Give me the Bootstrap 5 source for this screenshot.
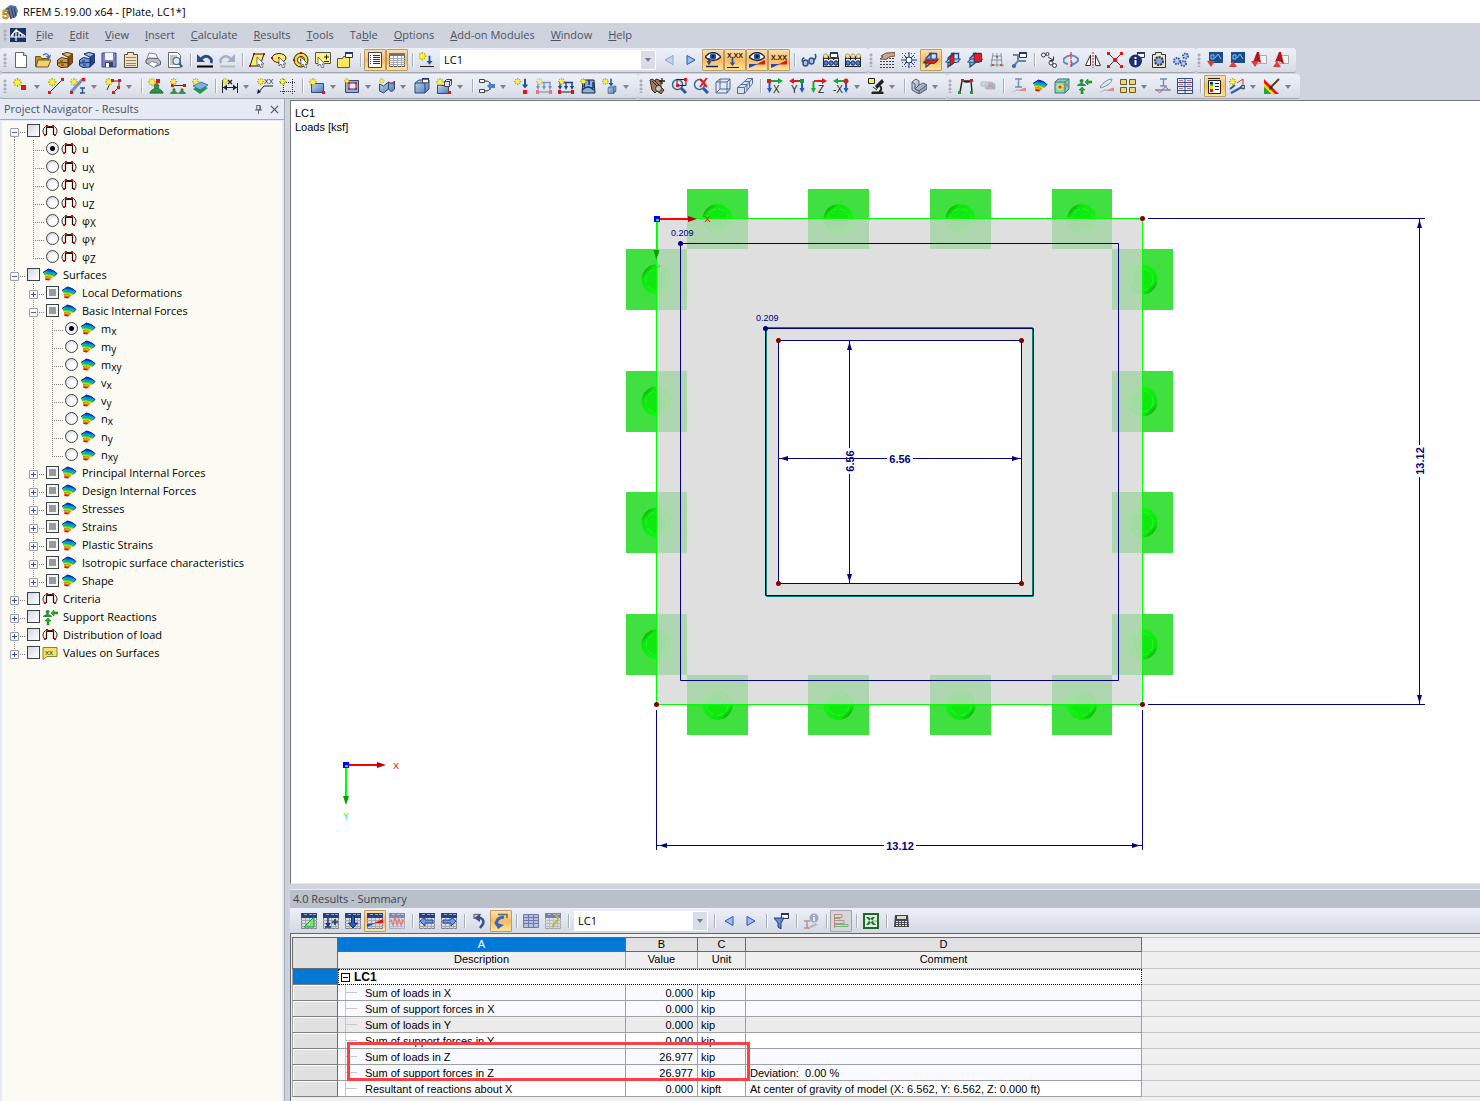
<!DOCTYPE html>
<html lang="en">
<head>
<meta charset="utf-8">
<meta name="viewport" content="width=device-width, initial-scale=1">
<title>RFEM 5.19.00 x64 - [Plate, LC1*]</title>
<link href="https://cdn.jsdelivr.net/npm/bootstrap@5.3.0/dist/css/bootstrap.min.css" rel="stylesheet">
<style>
  :root { --ui: "Open Sans", "Noto Sans", sans-serif; --grid: "Liberation Sans", Arial, sans-serif; }
  body { font-family: var(--ui); font-size: 11px; line-height: 16px; color: #000; background: #cfd3de; height: 100vh; overflow: hidden; }
  svg { display: block; }
  svg text { font-family: var(--grid); }
  .sprite { position: absolute; width: 0; height: 0; }
  .titlebar { height: 23px; padding: 0 2px; gap: 5px; background: #fff; font-size: 11px; }
  .titlebar svg { width: 16px; height: 16px; overflow: visible; }
  .titlebar h1 { font-size: 11px; line-height: 16px; font-weight: 400; }
  .mainmenu { height: 24px; padding-left: 2px; background: #cfd3de; }
  .mainmenu a { color: #4b5264; text-decoration: none; padding: 0 8px; }
  .mainmenu svg { width: 16px; height: 14px; margin-right: 2px; }
  .grip { width: 8px; align-self: stretch; margin: 5px 0; flex: none; background: radial-gradient(circle at 3px 2px, #a8adb9 1px, transparent 2px) 0 0 / 8px 4px; }
  .mainmenu .grip { margin-top: 6px; margin-bottom: 6px; }
  .tbar { height: 25px; margin-top: 1px; padding-right: 4px; border-bottom: 1px solid #a3a7b0; border-radius: 3px; background: linear-gradient(#edf0f8, #e3e7f0 50%, #d6dae4); }
  .tbar.firstbar { padding-left: 2px; }
  .tool { width: 22px; height: 22px; padding: 0; border: 1px solid transparent; border-radius: 1px; display: flex; align-items: center; justify-content: center; flex: none; }
  .tool svg { width: 16px; height: 16px; overflow: visible; }
  .tool:hover { border-color: #c2a46e; background: #fde6b4; }
  .tool.active { border-color: #b99b68; background: linear-gradient(#fde0ae, #fcb95c 50%, #fde59a); }
  .tool.pressed { border-color: #a0a4aa; background: #d3d8d8; }
  .tool.drop { width: 35px; justify-content: flex-start; padding-left: 2px; gap: 5px; }
  .tool.drop::after { content: ""; border: 3px solid transparent; border-top: 4px solid #7c818b; border-bottom: 0; margin-top: 2px; }
  .divide { width: 1px; height: 14px; margin: 0 3px 0 4px; background: #a9aeba; box-shadow: 1px 0 #fff; flex: none; }
  .combo { appearance: none; height: 20px; padding: 0 18px 0 3px; margin: 0 2px; border: 1px solid #fff; border-radius: 0; font-size: 11px; line-height: 18px; color: #000; background: url("data:image/svg+xml,%3Csvg xmlns='http://www.w3.org/2000/svg' width='14' height='18'%3E%3Cpath fill='%23d9dde7' d='M0 0h14v18H0z'/%3E%3Cpath fill='%23757a86' d='M4 7h6l-3 4z'/%3E%3C/svg%3E") right 0 top 0 no-repeat #fff; flex: none; }
  .combo-main { width: 216px; }
  .combo-table { width: 134px; }

  .workspace { min-height: 0; }
  .navigator { width: 285px; flex: none; background: #e6eaf5; border-right: 1px solid #a4a9b8; }
  .panel-head { height: 21px; padding: 0 2px 0 4px; color: #4b5264; border-bottom: 1px solid #a4a9b8; }
  .panel-head h2 { font-size: 11px; line-height: 16px; font-weight: 400; margin: 0; }
  .panel-head .btn { width: 16px; height: 16px; padding: 0; border: 0; display: flex; align-items: center; justify-content: center; }
  .panel-head .btn svg { width: 9px; height: 9px; }
  .tree { margin: 1px 2px 0; padding: 1px 0 0 3px; background: #fcfbf3; }
  .tree li { height: 18px; display: flex; align-items: stretch; }
  .guide, .twig, .fold { position: relative; width: 19px; flex: none; }
  .guide::before, .twig::before, .fold::before { content: ""; position: absolute; left: 9px; top: 0; bottom: 0; width: 1px; background: repeating-linear-gradient(#808080 0 1px, transparent 1px 2px); }
  .twig::after, .fold::after { content: ""; position: absolute; left: 9px; right: -1px; top: 10px; height: 1px; background: repeating-linear-gradient(90deg, #808080 0 1px, transparent 1px 2px); }
  .top > .fold:last-of-type::before { top: 9px; }
  .end > .twig::before, .end > .fold::before { bottom: 8px; }
  .fold button { position: absolute; z-index: 1; left: 5px; top: 6px; width: 9px; height: 9px; padding: 0; border: 1px solid #999eaa; border-radius: 1px; background: linear-gradient(#4a64a8, #4a64a8) center / 5px 1px no-repeat #fbfbfb; }
  .fold button.shut { background: linear-gradient(#34519c, #34519c) center / 5px 1px no-repeat, linear-gradient(#34519c, #34519c) center / 1px 5px no-repeat, #fbfbfb; }
  .tree label { display: flex; align-items: center; padding-left: 3px; white-space: nowrap; }
  .tree label svg { width: 16px; height: 16px; margin: 0 5px 0 2px; overflow: visible; }
  .tree input { appearance: none; width: 13px; height: 13px; margin: 0 0 2px; flex: none; border: 1px solid #3c4048; background: linear-gradient(135deg, #d2d6e0, #fff); }
  .tree input[type=radio] { border-radius: 50%; background: radial-gradient(circle at 60% 65%, #fff 30%, #c3c8d5); }
  .tree input[type=radio]:checked { background: radial-gradient(circle, #000 0 2px, #eef0f5 3px); }
  .tree input.part { background: linear-gradient(#9a9a9a, #9a9a9a) center / 7px 7px no-repeat, #f4f5f8; }
  .tree .axis { font-size: 10px; padding-top: 3px; }

  .viewport { min-height: 0; margin-top: 1px; border: 1px solid #74777e; border-right: 0; border-bottom-color: #e4e7ee; background: #fff; overflow: hidden; }
  .viewport svg { width: 100%; height: 100%; }
  .docs { min-width: 0; padding-left: 5px; }
  .results { flex: none; margin-top: 5px; border-top: 1px solid #e9ecf4; }
  .results h2 { margin: 0; height: 18px; padding: 1px 3px; font-size: 11px; line-height: 16px; font-weight: 400; color: #3d4350; background: #b9c0ca; }
  .results .tablebar { height: 26px; padding-left: 8px; background: linear-gradient(#edf0f8, #d3d8e3); border-bottom: 1px solid #63666c; }
  .sheet { position: relative; height: 167px; padding: 3px 0 0 1px; background: #f0f0f0; border-left: 1px solid #63666c; overflow: hidden; }
  .sheet table { width: 100%; table-layout: fixed; border-collapse: separate; border-spacing: 0; font-family: var(--grid); font-size: 11px; line-height: 14px; }
  .sheet th, .sheet td { padding: 1px 3px 0; height: 16px; border: 0 solid #a0a0a0; border-width: 0 1px 1px 0; font-weight: 400; white-space: nowrap; overflow: hidden; }
  .sheet thead th { text-align: center; background: #f0f0f0; height: 17px; padding: 0 3px 2px; }
  .sheet thead tr:first-child th { height: 15px; padding: 0; border-color: #696969; border-top-width: 1px; background: #e1e1e1; line-height: 13px; }
  .sheet thead tr:first-child th.picked { background: #0078d7; color: #fff; }
  .sheet .rowhead { border-left-width: 1px; border-right-color: #696969; border-bottom-color: #808080; background: #e1e1e1; box-shadow: inset 1px 1px #fff; }
  .sheet thead tr:first-child th.rowhead { background: #e1e1e1; box-shadow: none; }
  .sheet .rowhead.picked { background: #0078d7; box-shadow: none; }
  .sheet .tint td { background: #f8faff; }
  .sheet .band td { background: #ebebeb; }
  .sheet .plain td { background: #fff; }
  .sheet td.case { border: 1px dotted #000; font-weight: 700; font-size: 12px; padding: 0 2px; background: #fff; }
  .case button { width: 9px; height: 9px; margin-right: 4px; padding: 0; border: 1px solid #000; background: linear-gradient(#000, #000) center / 5px 1px no-repeat #fff; vertical-align: 0; display: inline-block; }
  .sheet tr td.item { padding-left: 27px; background-image: linear-gradient(#c8c8c8, #c8c8c8), linear-gradient(#c8c8c8, #c8c8c8); background-size: 12px 1px, 1px 100%; background-position: 7px 7px, 7px 0; background-repeat: no-repeat; }
  .sheet .num { text-align: right; padding-right: 4px; padding-top: 0; }
  .sheet tr .void, .sheet thead tr:first-child .void { background: #f0f0f0; border-color: #c4c4c4; border-right: 0; }
  .sheet .note { padding-left: 4px; padding-top: 0; }
  .callout { position: absolute; left: 56px; top: 108px; width: 403px; height: 39px; border: 3px solid #fb4146; pointer-events: none; }
</style>
<script src="https://cdn.jsdelivr.net/npm/bootstrap@5.3.0/dist/js/bootstrap.bundle.min.js"></script>
</head>
<body class="d-flex flex-column">

<svg class="sprite" aria-hidden="true">
  <defs>
    <linearGradient id="gb" x1="0" y1="0" x2="1" y2="1"><stop offset="0" stop-color="#c3d6f2"/><stop offset="1" stop-color="#4f78b5"/></linearGradient>
    <linearGradient id="gg" x1="0" y1="0" x2="1" y2="1"><stop offset="0" stop-color="#dbe2ea"/><stop offset="1" stop-color="#7f8a99"/></linearGradient>
    <linearGradient id="rain" x1=".6" y1="0" x2=".4" y2="1"><stop offset=".05" stop-color="#0010c8"/><stop offset=".28" stop-color="#0090f0"/><stop offset=".45" stop-color="#10d860"/><stop offset=".62" stop-color="#d8e800"/><stop offset=".78" stop-color="#ff9800"/><stop offset=".95" stop-color="#e00000"/></linearGradient>
    <linearGradient id="ring" x1="0" y1="0" x2="1" y2="1"><stop offset=".1" stop-color="#0c9c0c"/><stop offset=".25" stop-color="#0ee50e"/><stop offset="1" stop-color="#10ff10"/></linearGradient>
    <linearGradient id="ringb" x1="1" y1="1" x2="0" y2="0"><stop offset=".1" stop-color="#0c9c0c"/><stop offset=".25" stop-color="#0ee50e"/><stop offset="1" stop-color="#10ff10"/></linearGradient>
  </defs>
  <!-- shared parts -->
  <symbol id="star" viewBox="0 0 16 16"><path d="M4.500 0v9M0 4.500h9M1.500 1.500l6 6M7.500 1.500l-6 6" stroke="#b8ab00" stroke-width="1.400"/><circle cx="4.500" cy="4.500" r="2.600" fill="#fff33a"/></symbol>
  <symbol id="cursor" viewBox="0 0 16 16"><path d="M8 5v9l2-2 2 4 2-1-2-3h3z" fill="#fff" stroke="#555" stroke-width=".8"/></symbol>
  <symbol id="win" viewBox="0 0 16 16"><path d="M8.500.500h7v5h-7z" fill="#fff" stroke="#333"/><path d="M8 0h8v2H8z" fill="#24386e"/></symbol>
  <symbol id="grd" viewBox="0 0 16 16"><path d="M.500.500h15v15H.500z" fill="#d9dbdf" stroke="#80848c"/><path d="M0 7.500h16M0 10.500h16M0 13.500h16M4.500 4v12M8.500 4v12M12.500 4v12" stroke="#a4a7ad"/><path d="M0 0h16v5H0z" fill="#28407c"/><path d="M3 1.500h3M8 1.500h3M12 1.500h3" stroke="#8fa4d0"/></symbol>
  <symbol id="cube" viewBox="0 0 16 16"><path d="M1 5l4-3h10v9l-4 4H1z" fill="url(#gb)" stroke="#2d4a78"/><path d="M1 5h10v10M11 5l4-3" stroke="#2d4a78" fill="none"/></symbol>
  <symbol id="lens" viewBox="0 0 16 16"><path d="M10 10l5 5" stroke="#2c58a8" stroke-width="3"/><circle cx="6.500" cy="6.500" r="5" fill="#dcebfb" stroke="#426098" stroke-width="1.500"/></symbol>
  <symbol id="eye" viewBox="0 0 16 16"><path d="M0 5Q8-4 16 5 8 12 0 5z" fill="#fff" stroke="#1b2e60" stroke-width="1.400"/><circle cx="8" cy="4.500" r="3.200" fill="#2a56a4"/><circle cx="8" cy="4.500" r="1.400" fill="#071331"/></symbol>
  <symbol id="grad" viewBox="0 0 16 16"><path d="M0 16v-4l9 0z" fill="#1848d8"/><path d="M7 12.500l9-4.500v4.500z" fill="#e01515"/></symbol>
  <symbol id="load" viewBox="0 0 16 16"><path d="M1 4.500h14M2 4v6M8 4v6M14 4v6" stroke="#1e3f90" stroke-width="1.400" fill="none"/><path d="M0 8h4l-2 4zM6 8h4l-2 4zM12 8h4l-2 4z" fill="#1e3f90"/><path d="M1 14h14" stroke="#222"/><path d="M0 12h3v4H0zM13 12h3v4h-3z" fill="#e01010"/></symbol>
  <symbol id="down" viewBox="0 0 16 16"><path d="M8 1v8" stroke="#2450a4" stroke-width="2.500"/><path d="M4 8h8l-4 5z" fill="#2450a4"/></symbol>
  <symbol id="trees" viewBox="0 0 16 16"><path d="M.500 4v11M15.500 4v11M5.500 4v4M10.500 4v4M0 14.500h16M0 6.500h16" stroke="#222"/><circle cx="3" cy="11" r="2.200" fill="#5c80cc" stroke="#122a66"/><circle cx="8" cy="11" r="2.200" fill="#5c80cc" stroke="#122a66"/><circle cx="13" cy="11" r="2.200" fill="#5c80cc" stroke="#122a66"/><circle cx="2.500" cy="4" r="2.200" fill="#ecdf9a" stroke="#8b7d33" stroke-width=".6"/><circle cx="8" cy="4" r="2.200" fill="#ecdf9a" stroke="#8b7d33" stroke-width=".6"/><circle cx="13.500" cy="4" r="2.200" fill="#ecdf9a" stroke="#8b7d33" stroke-width=".6"/></symbol>
  <symbol id="planes" viewBox="0 0 16 16"><path d="M6.500 1.500h7v8h-7z" fill="#cfe2f6" stroke="#1d4a90" stroke-width="1.400"/><path d="M3 6l5-4.500V11l-5 4z" fill="#8dbbe6" stroke="#1d4a90" stroke-width="1.300"/><path d="M.500 10l3.500-3h11.500l-3.500 3.500z" fill="#a8cdf0" stroke="#1d4a90"/></symbol>
  <symbol id="pine" viewBox="0 0 16 16"><path d="M8 5c-3 0-3 4-1 5-3 1-5 2-6 5h14c-1-3-3-4-6-5 2-1 2-5-1-5z" fill="#2c9347" stroke="#14612a"/></symbol>

  <!-- application -->
  <symbol id="app" viewBox="0 0 16 16"><path d="M3 5l5-4 6 1 2 5-2 6-5 2z" fill="#5c7ba3"/><path d="M6 4l3 11M9 3l3 11M12 3l2 9" stroke="#24364f"/></symbol>
  <symbol id="bridge" viewBox="0 0 16 14"><path d="M0 0h16v14H0z" fill="#19306b"/><path d="M0 9h16M1 8l5-6v11M6 2l9 6M3 6v3M9 4v5M12 6v3" stroke="#fff" fill="none" stroke-width="1.200"/></symbol>
  <symbol id="pin" viewBox="0 0 10 10"><path d="M3 .5h4v5H3zM1 5.500h8M5 6v4M6.500 1v5" fill="none" stroke="#555b69"/></symbol>
  <symbol id="cross" viewBox="0 0 10 10"><path d="M1 1l8 8M9 1L1 9" stroke="#555b69" stroke-width="1.400"/></symbol>

  <!-- tree -->
  <symbol id="frame" viewBox="0 0 16 16"><path d="M4.500 12V4.500h7V12" fill="none" stroke="#111" stroke-width="1.200"/><path d="M3.500 3.500Q-1 7 2.500 12M12.500 3.500q4.500 3.500 1 8.500M4 3.500h8" fill="none" stroke="#222"/><path d="M4 2h2v2H4zM10 2h2v2h-2zM2 11h2v2H2zM12 11h2v2h-2z" fill="#e00"/></symbol>
  <symbol id="fan" viewBox="0 0 16 16"><path d="M1 5.500L6.500 2Q12 3 15 6.500L11 10l-4 3.500q-2-.5-3.500-.5Q3 8 1 5.500z" fill="url(#rain)"/><path d="M1 5.500L6.500 2Q12 3 15 6.500l-3 3" fill="none" stroke="#0a1ca0"/><path d="M2 7.500q6-2.500 10 1.500M3 9.500q4-1.500 7 1.500" stroke="#14406a" stroke-opacity=".5" fill="none" stroke-width=".6"/></symbol>
  <symbol id="react" viewBox="0 0 16 16"><path d="M6 1c-3 0-3 3-1 4-2 1-4 1-4 3h9c0-2-2-2-4-3 2-1 2-4 0-4z" fill="#2c8a4c"/><path d="M9 4l3-3v2h4v2h-4v2zM6 9l3 3H7v4H5v-4H3z" fill="#18b818" stroke="#0a6a0a" stroke-width=".5"/></symbol>
  <symbol id="xx" viewBox="0 0 16 16"><path d="M1 2.500h14v9H5l-4 3z" fill="#f3e26a" stroke="#8f8126"/></symbol>

  <!-- file tools -->
  <symbol id="new" viewBox="0 0 16 16"><path d="M2.500.500h8l3 3v12h-11z" fill="#fff" stroke="#666"/><path d="M10.500.500v3h3" fill="#ddd" stroke="#666"/></symbol>
  <symbol id="open" viewBox="0 0 16 16"><path d="M.500 4.500h5l1 2h7v8h-13z" fill="#b98f28" stroke="#745a12"/><path d="M3 8h13l-3 7H1z" fill="#eed173" stroke="#745a12"/><path d="M8 3q5-3 6 2M11.500 4l2.500 2.500L15.500 3" stroke="#3f6fb0" fill="none" stroke-width="1.300"/></symbol>
  <symbol id="box" viewBox="0 0 16 16"><path d="M5 2l5-1.500L15.500 2v9L11 15V5z" fill="#7c4f17" stroke="#4e3108" stroke-width=".8"/><path d="M5 2l5-1.500L15.500 2 11 5z" fill="#eab868" stroke="#4e3108" stroke-width=".8"/><path d="M.500 8l4-2.500L11 7v8l-7 .500-3.500-2z" fill="#d79a48" stroke="#4e3108"/><path d="M1 11l10-.500M3 9h3M4 13h3" stroke="#4e3108" fill="none"/></symbol>
  <symbol id="boxb" viewBox="0 0 16 16"><path d="M5 2l5-1.500L15.500 2v9L11 15V5z" fill="#26458c" stroke="#152c66" stroke-width=".8"/><path d="M5 2l5-1.500L15.500 2 11 5z" fill="#9cbcf0" stroke="#152c66" stroke-width=".8"/><path d="M.500 8l4-2.500L11 7v8l-7 .500-3.500-2z" fill="#6c95dc" stroke="#152c66"/><path d="M1 11l10-.500M3 9h3M4 13h3" stroke="#152c66" fill="none"/></symbol>
  <symbol id="save" viewBox="0 0 16 16"><path d="M1 1h14v14H1z" fill="#7c83c4" stroke="#41478a"/><path d="M4 1h8v7H4z" fill="#f5f5fa"/><path d="M4 10h8v5H4z" fill="#3b3f63"/><path d="M5 11h3v4H5z" fill="#fff"/></symbol>
  <symbol id="notes" viewBox="0 0 16 16"><path d="M1.500 2.500h3v-2h6v2h4v13h-13z" fill="#f1e4c6" stroke="#5b4a2b"/><path d="M3 5.500h10M3 8.500h10M3 11.500h10M3 13.500h10" stroke="#94846a"/></symbol>
  <symbol id="print" viewBox="0 0 16 16"><path d="M2 7l2-6 7 1 2 5" fill="#fff" stroke="#888"/><path d="M1 8l3-2 9 .5 2.500 3v3L9 15l-8-4z" fill="#b9bbcb" stroke="#55586a"/><path d="M3 12l4-2.500 6 2L9 15.500z" fill="#fff" stroke="#777" stroke-width=".8"/></symbol>
  <symbol id="preview" viewBox="0 0 16 16"><path d="M1.500.500h9l3 3v12h-12z" fill="#fff" stroke="#666"/><path d="M3 4h7M3 6h5M3 8h4M3 10h4M3 12h5" stroke="#888"/><use href="#lens" x="5" y="4" width="11" height="12"/></symbol>
  <symbol id="undo" viewBox="0 0 16 16"><path d="M3 8Q9 1 14 7q1 2 0 4" fill="none" stroke="#2d4a86" stroke-width="2.800"/><path d="M0 2v8h8z" fill="#2d4a86"/><path d="M0 14.500h16" stroke="#000" stroke-width="2"/></symbol>
  <symbol id="redo" viewBox="0 0 16 16"><path d="M13 8Q7 1 2 7q-1 2 0 4" fill="none" stroke="#a3aec2" stroke-width="2.500"/><path d="M16 2v8H8z" fill="#a3aec2"/><path d="M1 14.500h15" stroke="#b4bac6" stroke-width="2"/></symbol>
  <symbol id="selq" viewBox="0 0 16 16"><path d="M5 2h10l-4 12H1z" fill="#fcec60" stroke="#222"/><path d="M4 1h2v2H4zM14 1h2v2h-2zM0 13h2v2H0z" fill="#e00"/><use href="#cursor" width="16" height="16"/></symbol>
  <symbol id="sele" viewBox="0 0 16 16"><ellipse cx="8" cy="6" rx="7" ry="4.500" fill="#fcec60" stroke="#222"/><path d="M7 5h2v2H7zM0 5h2v2H0zM7 10h2v2H7z" fill="#e00"/><use href="#cursor" width="16" height="16"/></symbol>
  <symbol id="selc" viewBox="0 0 16 16"><circle cx="8" cy="8" r="7" fill="#f5dc22" stroke="#222"/><circle cx="8" cy="8" r="3.500" fill="#fff" stroke="#222"/><path d="M7 7h2v2H7zM7 0h2v2H7zM0 7h2v2H0z" fill="#e00"/><use href="#cursor" width="16" height="16"/></symbol>
  <symbol id="selp" viewBox="0 0 16 16"><path d="M.500.500h15v11H.500z" fill="#fcf17c" stroke="#555"/><path d="M9 5h5M11.500 2.500v5M9 9.500h5" stroke="#222"/><use href="#cursor" x="-5" y="0" width="16" height="16"/></symbol>
  <symbol id="selw" viewBox="0 0 16 16"><path d="M.500 6.500h5l1-2h6v11H.500z" fill="#fbe75c" stroke="#555"/><use href="#win" width="16" height="16"/></symbol>
  <symbol id="listv" viewBox="0 0 16 16"><path d="M1.500.500h13v15h-13z" fill="#fff" stroke="#444"/><path d="M3 3.500h1M3 5.500h1M3 7.500h1M3 9.500h1M3 11.500h1M6 3.500h7M6 5.500h7M6 7.500h7M6 9.500h7M6 11.500h7" stroke="#333"/></symbol>
  <symbol id="gridv" viewBox="0 0 16 16"><path d="M.500 1.500h15v13H.500z" fill="#fff" stroke="#555"/><path d="M0 1h16v3H0z" fill="#6d7484"/><path d="M0 6.500h16M0 8.500h16M0 10.500h16M0 12.500h16M4.500 4v11M8.500 4v11M12.500 4v11" stroke="#a3a8b2"/></symbol>
  <symbol id="newlc" viewBox="0 0 16 16"><use href="#star" x="-1" y="0" width="15" height="15"/><use href="#down" x="3" y="3" width="15" height="12"/><path d="M1 14.500h14" stroke="#222"/></symbol>
  <symbol id="prev" viewBox="0 0 16 16"><path d="M12 3.500v9L4 8z" fill="#c4d5f4" stroke="#8ea3d0"/></symbol>
  <symbol id="prevb" viewBox="0 0 16 16"><path d="M12 3.500v9L4 8z" fill="#9dbcf4" stroke="#2a52b8"/></symbol>
  <symbol id="next" viewBox="0 0 16 16"><path d="M4 3.500v9L12 8z" fill="#9dbcf4" stroke="#2a52b8"/></symbol>
  <symbol id="eyel" viewBox="0 0 16 16"><use href="#eye" width="16" height="16"/><path d="M4 6v6M1 14.500h12" stroke="#1b2e60" stroke-width="1.500"/><path d="M1.500 9h5L4 13.500z" fill="#2450a4"/></symbol>
  <symbol id="xxl" viewBox="0 0 16 16"><use href="#down" x="0" y="5" width="11" height="11"/><path d="M0 15.500h12" stroke="#222"/></symbol>
  <symbol id="eyeg" viewBox="0 0 16 16"><use href="#eye" width="16" height="16"/><use href="#grad" width="16" height="16"/></symbol>
  <symbol id="glass" viewBox="0 0 16 16"><ellipse cx="4.500" cy="11" rx="2.500" ry="3" fill="#a8c0e4" stroke="#344f80" stroke-width="1.500"/><ellipse cx="10.500" cy="9" rx="2.500" ry="3" fill="#a8c0e4" stroke="#344f80" stroke-width="1.500"/><path d="M1.500 10q-1-4 2-4M13 8q3-3 1-6" fill="none" stroke="#344f80" stroke-width="1.500"/></symbol>
  <symbol id="treesw" viewBox="0 0 16 16"><use href="#trees" width="16" height="16"/><use href="#win" x="-1" width="16" height="16"/></symbol>
  <symbol id="hand" viewBox="0 0 16 16"><path d="M1 6.500h14M1 9.500h14M1 12.500h14M1 15.500h14" stroke="#444" stroke-dasharray="2 1"/><path d="M2 4l5-3 9-.5V4l-6 1-3 2.500L1 7l3-2z" fill="#caa58a" stroke="#5c3c22" stroke-width=".8"/></symbol>
  <symbol id="snap" viewBox="0 0 16 16"><path d="M1 1.500h15M1 5.500h15M1 10.500h15M1 14.500h15" stroke="#555" stroke-dasharray="1 2"/><path d="M8 0v16M0 8h16M3 3l10 10M13 3L3 13" stroke="#17378c"/><circle cx="8" cy="8" r="3" fill="#fff" stroke="#17378c"/></symbol>
  <symbol id="pxy" viewBox="0 0 16 16"><use href="#planes" width="16" height="16"/><path d="M.500 11l3.500-3h11l-3.500 3.500z" fill="#e02020" stroke="#222" stroke-width=".7"/></symbol>
  <symbol id="pyz" viewBox="0 0 16 16"><use href="#planes" width="16" height="16"/><path d="M5 5l4-3.500v9.500L5 14z" fill="#e02020" stroke="#222" stroke-width=".7"/></symbol>
  <symbol id="pxz" viewBox="0 0 16 16"><use href="#planes" width="16" height="16"/><path d="M7 1.500h7.500v8H7z" fill="#e02020" stroke="#222" stroke-width=".7"/></symbol>
  <symbol id="mesh" viewBox="0 0 16 16"><path d="M4 1L2 15M8 1v14M12 1l1 14M3 4h10M2 8h11M1 13h14" stroke="#7f98ac" fill="none"/><path d="M7 4h2v2H7zM3 12h2v2H3zM11 12h2v2h-2z" fill="#d44"/></symbol>
  <symbol id="gridw" viewBox="0 0 16 16"><path d="M2 15L7 9v-7M2 3h11M7 9h8" stroke="#6483b4" fill="none" stroke-width="2"/><use href="#win" width="16" height="16"/><circle cx="3" cy="14" r="2" fill="#3f65a4"/></symbol>
  <symbol id="copy" viewBox="0 0 16 16"><circle cx="2.500" cy="3" r="2" fill="#fff" stroke="#333"/><circle cx="6.500" cy="2" r="1.500" fill="#fff" stroke="#333"/><circle cx="10" cy="11" r="2" fill="#fff" stroke="#333"/><circle cx="13.500" cy="13.500" r="2" fill="#fff" stroke="#333"/><path d="M7 5l5 3M12.500 4.500v4h-4" stroke="#333" fill="none"/></symbol>
  <symbol id="rot" viewBox="0 0 16 16"><path d="M5 12Q-1 11 1 6.500 8 0 15 6.500 16 10 10 12" fill="none" stroke="#5d88c4" stroke-width="1.800"/><path d="M8 9.500v5.500l4.500-3z" fill="#5d88c4"/><path d="M8 0v16" stroke="#e11" stroke-dasharray="3 1"/></symbol>
  <symbol id="mirror" viewBox="0 0 16 16"><path d="M8 0v16" stroke="#e11" stroke-dasharray="2 1"/><path d="M5.500 3v10.500H.500zM10.500 3v10.500h5z" fill="#fff" stroke="#333"/></symbol>
  <symbol id="inter" viewBox="0 0 16 16"><path d="M1 1l14 14M15 1L1 15" stroke="#333"/><path d="M0 0h3v3H0zM13 0h3v3h-3zM0 13h3v3H0zM13 13h3v3h-3zM6 6h4v4H6z" fill="#e11"/></symbol>
  <symbol id="info" viewBox="0 0 16 16"><use href="#win" width="16" height="16"/><circle cx="6.500" cy="9" r="6.500" fill="#1d2f74"/><path d="M6.500 8v5M6.500 5v2" stroke="#fff" stroke-width="2"/></symbol>
  <symbol id="clock" viewBox="0 0 16 16"><path d="M1.500 2.500h3v-2h6v2h4v13h-13z" fill="#f1e6c4" stroke="#333"/><circle cx="8" cy="9" r="4" fill="#88a4cf" stroke="#1f3768" stroke-width="2" stroke-dasharray="2 1"/></symbol>
  <symbol id="gears" viewBox="0 0 16 16"><g fill="#bad0f2" stroke="#2f57a3" stroke-width="2" stroke-dasharray="1.500 1"><circle cx="4" cy="9" r="3"/><circle cx="12.500" cy="4" r="2.500"/><circle cx="10.500" cy="11.500" r="2.500"/></g></symbol>
  <symbol id="extd" viewBox="0 0 16 16"><path d="M2 0h14v11H2z" fill="#1c4c88"/><path d="M4 3h3v4H4zM8 6l3-4 3 5" fill="none" stroke="#7fc3ff"/><path d="M0 9h8l-4 6z" fill="#e23a3a"/></symbol>
  <symbol id="extu" viewBox="0 0 16 16"><path d="M2 0h14v11H2z" fill="#1c4c88"/><path d="M4 3h3v4H4zM8 6l3-4 3 5" fill="none" stroke="#7fc3ff"/><path d="M0 15h8l-4-6z" fill="#e23a3a"/></symbol>
  <symbol id="pdfd" viewBox="0 0 16 16"><path d="M6.500 3.500h9v8h-9z" fill="#f5f5f5" stroke="#aaa"/><path d="M2 10l4-10h2l2 11-4-2z" fill="#b3161c"/><path d="M0 9h8l-4 6z" fill="#e23a3a"/></symbol>
  <symbol id="pdfu" viewBox="0 0 16 16"><path d="M6.500 3.500h9v8h-9z" fill="#f5f5f5" stroke="#aaa"/><path d="M2 10l4-10h2l3 12-5-3z" fill="#b3161c"/><path d="M0 15h8l-4-6z" fill="#e23a3a"/></symbol>

  <!-- modelling tools -->
  <symbol id="node" viewBox="0 0 16 16"><use href="#star" width="16" height="16"/><path d="M8 7h5v5H8z" fill="#e11"/></symbol>
  <symbol id="line" viewBox="0 0 16 16"><path d="M2 14L14 2" stroke="#333"/><use href="#star" width="15" height="15"/><path d="M0 13h3v3H0zM13 0h3v3h-3z" fill="#e11"/></symbol>
  <symbol id="member" viewBox="0 0 16 16"><path d="M1 14L13 1" stroke="#6f93cc" stroke-width="3"/><use href="#star" width="14" height="14"/><path d="M10 10h5M12.500 10v5M10 15h5" stroke="#2d4f94" stroke-width="1.400"/><path d="M0 13h3v3H0zM12 0h3v3h-3z" fill="#e11"/></symbol>
  <symbol id="poly" viewBox="0 0 16 16"><path d="M2 12l4-9h8v6l-5 5" stroke="#333" fill="none"/><use href="#star" width="14" height="14"/><path d="M6 1h3v3H6zM13 1h3v3h-3zM12 8h3v3h-3zM7 13h3v3H7z" fill="#e11"/></symbol>
  <symbol id="nsup" viewBox="0 0 16 16"><use href="#pine" x="1" y="1" width="15" height="15"/><path d="M8 1h4v4H8z" fill="#e11"/><use href="#star" width="14" height="14"/></symbol>
  <symbol id="lsup" viewBox="0 0 16 16"><use href="#pine" y="8" width="8" height="8"/><use href="#pine" x="8" y="8" width="8" height="8"/><path d="M2 7.500h12" stroke="#333"/><path d="M1 6h3v3H1zM13 6h3v3h-3z" fill="#e11"/><use href="#star" width="13" height="13"/></symbol>
  <symbol id="ssup" viewBox="0 0 16 16"><path d="M1 11l8-4 7 3-8 6z" fill="#1f9a47"/><path d="M1 8l8-4 7 3-8 5z" fill="#7db0ea" stroke="#23508f" stroke-width=".7"/><use href="#star" width="13" height="13"/></symbol>
  <symbol id="dim" viewBox="0 0 16 16"><path d="M.500 2v13M15.500 5v10M1 9.500h14" stroke="#222"/><path d="M1 9.500l4-3v6zM15 9.500l-4-3v6z" fill="#222"/><path d="M6 2l4 4M10 2L6 6" stroke="#222" stroke-width="1.300"/><use href="#star" width="11" height="11"/></symbol>
  <symbol id="comm" viewBox="0 0 16 16"><path d="M1 15L7 8h9" stroke="#222" fill="none"/><path d="M0 16l1-5 3 3z" fill="#222"/><use href="#star" width="13" height="13"/></symbol>
  <symbol id="raster" viewBox="0 0 16 16"><path d="M4.500 1v15M13.500 1v15M1 4.500h15M1 13.500h15" stroke="#333" stroke-dasharray="1 1"/><use href="#star" width="13" height="13"/></symbol>
  <symbol id="surf" viewBox="0 0 16 16"><path d="M2.500 5.500h12v9h-12z" fill="url(#gb)" stroke="#2d4a78"/><use href="#star" width="14" height="14"/><path d="M13 13h3v3h-3z" fill="#e11"/></symbol>
  <symbol id="opening" viewBox="0 0 16 16"><path d="M1.500 2.500h13v12h-13z" fill="#8db0dd" stroke="#2d4a78"/><path d="M5 5h7v6H5z" fill="#dfe7f0" stroke="#822"/><use href="#star" width="10" height="10"/><path d="M4 4h2v2H4zM11 4h2v2h-2zM4 10h2v2H4zM11 10h2v2h-2z" fill="#e11"/></symbol>
  <symbol id="inters" viewBox="0 0 16 16"><path d="M.500 6l4 2 5-4v7l-5 4-4-2zM9.500 4l3 2 3-3v8l-3 3-3-3z" fill="url(#gb)" stroke="#2d4a78"/><path d="M11 5h4v3" fill="none" stroke="#c22"/><use href="#star" width="10" height="10"/></symbol>
  <symbol id="solidw" viewBox="0 0 16 16"><use href="#cube" y="0" width="16" height="16"/><use href="#win" width="16" height="14"/></symbol>
  <symbol id="solidn" viewBox="0 0 16 16"><path d="M1.500 7.500h11v8h-11z" fill="url(#gb)" stroke="#2d4a78"/><path d="M8.500 3.500l2-2h5v5l-2 2h-5zM8.500 3.500h5v5M13.500 3.500l2-2" fill="#dfe6f0" stroke="#444"/><use href="#star" width="14" height="14"/><path d="M12 13h3v3h-3z" fill="#e11"/></symbol>
  <symbol id="flow" viewBox="0 0 16 16"><path d="M.500 1.500h5v3h-5zM.500 11.500h5v3h-5z" fill="#fff" stroke="#444"/><path d="M6 3q5 0 5 3M6 13q5 0 5-3" fill="none" stroke="#333"/><path d="M16 6v4h-4v2L8 8l4-4v2z" fill="#4b82cc"/></symbol>
  <symbol id="nload" viewBox="0 0 16 16"><use href="#down" x="4" y="0" width="14" height="13"/><use href="#star" width="13" height="13"/><path d="M9 12h4v4H9z" fill="#e11"/></symbol>
  <symbol id="lload" viewBox="0 0 16 16"><use href="#load" width="16" height="16"/><use href="#star" width="13" height="13"/></symbol>
  <symbol id="lloadg" viewBox="0 0 16 16"><g opacity=".5"><use href="#load" width="16" height="16"/><use href="#star" width="13" height="13"/></g></symbol>
  <symbol id="sload" viewBox="0 0 16 16"><path d="M3 2h11l1 13H2z" fill="#89b0de" stroke="#222"/><path d="M5 3l-1 6M9 2v5M13 4v6M2 12q6-6 12 0" stroke="#15357c" stroke-width="1.500" fill="none"/><use href="#star" width="12" height="12"/></symbol>
  <symbol id="vload" viewBox="0 0 16 16"><use href="#cube" x="4" y="7" width="12" height="9"/><use href="#down" x="3" y="0" width="12" height="10"/><use href="#star" width="12" height="12"/></symbol>
  <symbol id="pan" viewBox="0 0 16 16"><path d="M1 2l2-1 3 2 1-2 3 1 2 1v6l3 3-3 4-4-3-2 2-3-3z" fill="#a07a5c" stroke="#3c2b1d"/><path d="M3 3l5 5M6 3l4 4" stroke="#3c2b1d"/><path d="M13 0v6M10 3h6" stroke="#222" stroke-width="1.300"/><circle cx="9.500" cy="10.500" r="3" fill="#cfc6bc" stroke="#333"/></symbol>
  <symbol id="zoomw" viewBox="0 0 16 16"><use href="#lens" width="16" height="16"/><path d="M6 1.500h9v6H6z" fill="none" stroke="#222"/><path d="M5 6h3v3H5zM13 0h3v3h-3z" fill="#e11"/></symbol>
  <symbol id="zoomx" viewBox="0 0 16 16"><use href="#lens" width="16" height="16"/><path d="M7 1l7 8M14 0L7 9" stroke="#e02020" stroke-width="2"/></symbol>
  <symbol id="wire" viewBox="0 0 16 16"><path d="M1 4l4-3h10v10l-3 4H1z" fill="#dfe9f6" stroke="#4c6692"/><path d="M1 4h11v11M12 4l3-3M5 1v10h10M5 11l-4 4" stroke="#4c6692" fill="none"/></symbol>
  <symbol id="blocks" viewBox="0 0 16 16"><path d="M7.500 3.500l3-3h5v5l-8 10h-7v-6z" fill="#d8e2f2" stroke="#536d9b"/><path d="M.500 9.500h7v6M7.500 9.500l8-9M7.500 3.500h5v5M4 6.500h6v6" fill="none" stroke="#536d9b"/></symbol>
  <symbol id="vx" viewBox="0 0 16 16"><path d="M3 3h8" stroke="#18a838" stroke-width="2"/><path d="M11 0l5 3-5 3z" fill="#18a838"/><path d="M2.500 3v8" stroke="#2458d0" stroke-width="2"/><path d="M0 10h5l-2.500 5z" fill="#2458d0"/><path d="M0 1h4v4H0z" fill="#c22"/></symbol>
  <symbol id="vy" viewBox="0 0 16 16"><path d="M13 3H5" stroke="#d62020" stroke-width="2"/><path d="M5 0L0 3l5 3z" fill="#d62020"/><path d="M13 3v8" stroke="#2458d0" stroke-width="2"/><path d="M10.500 10h5L13 15z" fill="#2458d0"/><path d="M11 1h4v4h-4z" fill="#1a9a38"/></symbol>
  <symbol id="vz" viewBox="0 0 16 16"><path d="M3 3h8" stroke="#d62020" stroke-width="2"/><path d="M11 0l5 3-5 3z" fill="#d62020"/><path d="M2.500 3v8" stroke="#18a838" stroke-width="2"/><path d="M0 10h5l-2.500 5z" fill="#18a838"/></symbol>
  <symbol id="vmx" viewBox="0 0 16 16"><path d="M13 3H5" stroke="#18a838" stroke-width="2"/><path d="M5 0L0 3l5 3z" fill="#18a838"/><path d="M13 3v8" stroke="#2458d0" stroke-width="2"/><path d="M10.500 10h5L13 15z" fill="#2458d0"/><circle cx="13" cy="3" r="2.500" fill="#d62020"/></symbol>
  <symbol id="micro" viewBox="0 0 16 16"><path d="M.500.500h6v5h-6z" fill="#fcee60" stroke="#222"/><path d="M14 1L7 8l2 3 7-7z" fill="#222"/><path d="M12 8q3 3-1 6" fill="none" stroke="#222" stroke-width="2"/><path d="M4 14h11v2H4zM5 9l4 3" fill="#222" stroke="#222"/></symbol>
  <symbol id="lshape" viewBox="0 0 16 16"><path d="M1 4l4-3 3 2v4l4-2 4 2v4l-8 5-7-4z" fill="url(#gg)" stroke="#4f5f74"/><path d="M1 4l3 2v5l4 2v3M8 7l-4 4M16 7l-8 6" fill="none" stroke="#4f5f74"/></symbol>

  <!-- result tools -->
  <symbol id="nframe" viewBox="0 0 16 16"><path d="M2 14L4 3h9l1 11M5 3q4 2 8 0" fill="none" stroke="#222" stroke-width="1.400"/><path d="M3 1h3v3H3zM12 1h3v3h-3z" fill="#e11"/><path d="M0 13h3v3H0zM12 13h3v3h-3z" fill="#1a9a38"/></symbol>
  <symbol id="solidr" viewBox="0 0 16 16"><path d="M1 4h10l4 2v5H6l-1-3H1z" fill="url(#gg)" stroke="#a0a5ae" opacity=".7"/><path d="M8 6h5M8 8h5" stroke="#c88"/></symbol>
  <symbol id="mres" viewBox="0 0 16 16"><path d="M5 1h7M8.500 1v8M5 9h7" stroke="#6f8dc4" stroke-width="1.400"/><path d="M0 15l8-4v1z" fill="#7fa0e0"/><path d="M7 12.500l9-3v4z" fill="#e08a8a"/></symbol>
  <symbol id="cubec" viewBox="0 0 16 16"><path d="M1 4l3-3h11v10l-4 4H1z" fill="#7fd4b8" stroke="#49708c"/><path d="M1 4h10v11M11 4l4-3" fill="none" stroke="#49708c"/><circle cx="6" cy="9" r="3.500" fill="#d6e05c"/><circle cx="6" cy="9" r="1.600" fill="#e33"/><ellipse cx="13" cy="7" rx="1" ry="2" fill="#e66"/></symbol>
  <symbol id="sect" viewBox="0 0 16 16"><path d="M2 9Q8 1 14 1q0 5-11 9z" fill="#e4e9f0" stroke="#7d8ca4"/><path d="M0 15l8-4v1z" fill="#7fa0e0"/><path d="M7 12.500l9-3v4z" fill="#e08a8a"/></symbol>
  <symbol id="tiles" viewBox="0 0 16 16"><g fill="#eed77a" stroke="#6a5a20"><path d="M.500 1.500h6v5h-6zM9.500 1.500h6v5h-6zM.500 9.500h6v5h-6zM9.500 9.500h6v5h-6z"/></g></symbol>
  <symbol id="sectw" viewBox="0 0 16 16"><path d="M5 1h7M8.500 1v7M5 8h7M0 12h16" stroke="#6f8dc4" stroke-width="1.400"/><path d="M2 12q3 5 5 0 3-5 7 0" fill="none" stroke="#d55"/></symbol>
  <symbol id="bars" viewBox="0 0 16 16"><path d="M.500.500h15v15H.500zM8 0v16M0 4.500h16M0 8.500h16M0 12.500h16" fill="#e8edf8" stroke="#2d4c98"/><path d="M2 2.500h4M10 2.500h4M2 6.500h4M10 6.500h4M2 10.500h4M10 10.500h4" stroke="#d66"/></symbol>
  <symbol id="panel" viewBox="0 0 16 16"><path d="M1.500 2.500h12v13h-12z" fill="#fff" stroke="#222"/><path d="M3 4h3v2H3z" fill="#11c"/><path d="M3 6h3v2H3z" fill="#1c5"/><path d="M3 8h3v3H3z" fill="#fd0"/><path d="M3 11h3v3H3z" fill="#e11"/><path d="M8 5.500h4M8 8.500h4M8 11.500h4M1 .500h12" stroke="#222"/></symbol>
  <symbol id="wand" viewBox="0 0 16 16"><path d="M1 11l5-4M2 15l11-6" stroke="#355a98" stroke-width="2"/><path d="M8 5l6-4v5" stroke="#c33" fill="none"/><use href="#star" width="13" height="13"/><circle cx="14" cy="9" r="2" fill="#9fb8dd" stroke="#333"/></symbol>
  <symbol id="brush" viewBox="0 0 16 16"><path d="M0 1l15 15H0z" fill="#e11"/><path d="M0 5l11 11H7L0 9z" fill="#fd0"/><path d="M0 9l7 7H0z" fill="#1a4"/><path d="M7 9l8-8" stroke="#5b3a14" stroke-width="2"/><path d="M5 12l1-4 3 2z" fill="#222"/></symbol>

  <!-- table tools -->
  <symbol id="t1" viewBox="0 0 16 16"><use href="#grd" width="16" height="16"/><path d="M3 14L13 4v10z" fill="#7fdf7f" stroke="#1d9a2c"/><path d="M9 10v2H7z" fill="#e8f8e8"/></symbol>
  <symbol id="t2" viewBox="0 0 16 16"><use href="#grd" width="16" height="16"/><path d="M5 5v7M3 10l2 3 2-3M2 14h6M9 9h6M12 6v6" stroke="#17377e" stroke-width="1.500" fill="none"/></symbol>
  <symbol id="t3" viewBox="0 0 16 16"><use href="#grd" width="16" height="16"/><path d="M6.500 3h3v7h3L8 15l-4.500-5h3z" fill="#2c5cae" stroke="#122d68"/></symbol>
  <symbol id="t4" viewBox="0 0 16 16"><use href="#grd" width="16" height="16"/><path d="M0 14v-3l9-1z" fill="#1848d8"/><path d="M7 10l9-4v4z" fill="#e01515"/></symbol>
  <symbol id="t5" viewBox="0 0 16 16"><g opacity=".55"><use href="#grd" width="16" height="16"/><path d="M0 9l2-2 2 5 2-8 2 8 2-6 2 6 2-5 2 3" fill="none" stroke="#e02828" stroke-width="1.300"/></g></symbol>
  <symbol id="t6" viewBox="0 0 16 16"><use href="#grd" width="16" height="16"/><path d="M1 8l5-4v3h8v3H6v3z" fill="#6c9cec" stroke="#1c3f90" stroke-width=".9"/></symbol>
  <symbol id="t7" viewBox="0 0 16 16"><use href="#grd" width="16" height="16"/><path d="M15 8l-5-4v3H2v3h8v3z" fill="#6c9cec" stroke="#1c3f90" stroke-width=".9"/></symbol>
  <symbol id="t8" viewBox="0 0 16 16"><path d="M3 1.500h7M3 1v5" stroke="#777" stroke-width="1.500"/><path d="M6 4q8 1 6 7l-3 4" fill="none" stroke="#33538c" stroke-width="2.500"/><path d="M9 1L3 5l6 4z" fill="#33538c"/></symbol>
  <symbol id="t9" viewBox="0 0 16 16"><path d="M5 1.500h9V5" stroke="#666" stroke-width="1.500" fill="none"/><path d="M11 4Q2 5 4 12" fill="none" stroke="#3a68b4" stroke-width="3"/><path d="M1 9l4 7 6-4z" fill="#3a68b4"/></symbol>
  <symbol id="t10" viewBox="0 0 16 16"><path d="M.500 1.500h15v13H.500zM0 4.500h16M0 7.500h16M0 10.500h16M5.500 1v13M10.500 1v13" fill="#b8bfdc" stroke="#6f78a8"/></symbol>
  <symbol id="t11" viewBox="0 0 16 16"><g opacity=".6"><use href="#grd" width="16" height="16"/></g><path d="M11 2q4 4 0 7l-4 5" fill="none" stroke="#c6b334" stroke-width="2"/></symbol>
  <symbol id="filt" viewBox="0 0 16 16"><use href="#win" width="16" height="16"/><path d="M1 5h10L8 10v6l-3-2v-4z" fill="#5c8cd6" stroke="#1e3e80"/></symbol>
  <symbol id="infog" viewBox="0 0 16 16"><path d="M1 8h6M4 8v7M1 15h6" stroke="#c98a8a" stroke-width="1.500"/><path d="M6 13l7-3 2 2-7 3z" fill="#bbb"/><circle cx="11" cy="5" r="4.500" fill="#9fa9c6"/><path d="M11 4v4M11 2v1" stroke="#fff" stroke-width="1.500"/></symbol>
  <symbol id="prog" viewBox="0 0 16 16"><path d="M1.500 1v14M1 1.500h8v3H1M1 7.500h10v3H1" fill="none" stroke="#c88686"/><path d="M2 5.500h5v1M2 11.500h13v2H2" fill="none" stroke="#7bae7b"/></symbol>
  <symbol id="excel" viewBox="0 0 16 16"><path d="M1 1h14v14H1z" fill="#e4f1e4" stroke="#1c6b26" stroke-width="2"/><path d="M3 4h3l7 8h-3zM12 4H9l-6 8h3z" fill="#1c7a2c"/><path d="M10 8h4" stroke="#6ab272"/></symbol>
  <symbol id="calc" viewBox="0 0 16 16"><path d="M2 2h13l1 12H1z" fill="#42454c"/><path d="M4 3h9v3H4z" fill="#d4dccc"/><path d="M3 8.500h11M3 10.500h11M3 12.500h11" stroke="#eee" stroke-dasharray="2 1"/></symbol>
</svg>

<header>
  <div class="titlebar d-flex align-items-center"><svg aria-hidden="true"><use href="#app"/><text x="0" y="15" font-size="13" font-weight="700" fill="#f6c921" stroke="#6a5212" stroke-width=".5">5</text></svg><h1 class="mb-0">RFEM 5.19.00 x64 - [Plate, LC1*]</h1></div>
  <nav class="mainmenu d-flex align-items-center" aria-label="Main menu">
    <span class="grip"></span><svg aria-hidden="true"><use href="#bridge"/></svg>
    <a href="#"><u>F</u>ile</a><a href="#"><u>E</u>dit</a><a href="#"><u>V</u>iew</a><a href="#"><u>I</u>nsert</a><a href="#"><u>C</u>alculate</a><a href="#"><u>R</u>esults</a><a href="#"><u>T</u>ools</a><a href="#">Ta<u>b</u>le</a><a href="#"><u>O</u>ptions</a><a href="#"><u>A</u>dd-on Modules</a><a href="#"><u>W</u>indow</a><a href="#"><u>H</u>elp</a>
  </nav>

  <div class="d-flex">
    <div class="tbar firstbar d-flex align-items-center" role="toolbar" aria-label="Standard">
      <span class="grip"></span>
      <button class="btn tool" aria-label="New"><svg><use href="#new"/></svg></button>
      <button class="btn tool" aria-label="Open"><svg><use href="#open"/></svg></button>
      <button class="btn tool" aria-label="Project manager"><svg><use href="#box"/></svg></button>
      <button class="btn tool" aria-label="Block manager"><svg><use href="#boxb"/></svg></button>
      <button class="btn tool" aria-label="Save"><svg><use href="#save"/></svg></button>
      <button class="btn tool" aria-label="General data"><svg><use href="#notes"/></svg></button>
      <button class="btn tool" aria-label="Print"><svg><use href="#print"/></svg></button>
      <button class="btn tool" aria-label="Printout report"><svg><use href="#preview"/></svg></button>
      <span class="divide"></span>
      <button class="btn tool" aria-label="Undo"><svg><use href="#undo"/></svg></button>
      <button class="btn tool" aria-label="Redo"><svg><use href="#redo"/></svg></button>
      <span class="divide"></span>
      <button class="btn tool" aria-label="Select by rhomboid"><svg><use href="#selq"/></svg></button>
      <button class="btn tool" aria-label="Select by ellipse"><svg><use href="#sele"/></svg></button>
      <button class="btn tool" aria-label="Select by annulus"><svg><use href="#selc"/></svg></button>
      <button class="btn tool" aria-label="Add to selection"><svg><use href="#selp"/></svg></button>
      <button class="btn tool" aria-label="Special selection"><svg><use href="#selw"/></svg></button>
      <span class="divide"></span>
      <button class="btn tool active" aria-label="Navigator"><svg><use href="#listv"/></svg></button>
      <button class="btn tool active" aria-label="Tables"><svg><use href="#gridv"/></svg></button>
      <span class="divide"></span>
      <button class="btn tool" aria-label="New load case"><svg><use href="#newlc"/></svg></button>
      <select class="combo combo-main" aria-label="Load case"><option>LC1</option></select>
      <button class="btn tool" aria-label="Previous load case"><svg><use href="#prev"/></svg></button>
      <button class="btn tool" aria-label="Next load case"><svg><use href="#next"/></svg></button>
      <button class="btn tool active" aria-label="Show loads"><svg><use href="#eyel"/></svg></button>
      <button class="btn tool active" aria-label="Show load values"><svg><use href="#xxl"/><text x="0" y="6" font-size="7" font-weight="700" fill="#222">X.XX</text></svg></button>
      <button class="btn tool active" aria-label="Show results"><svg><use href="#eyeg"/></svg></button>
      <button class="btn tool active" aria-label="Show result values"><svg><use href="#grad"/><text x="0" y="8" font-size="7" font-weight="700" fill="#222">X.XX</text></svg></button>
      <span class="divide"></span>
      <button class="btn tool" aria-label="Visibility"><svg><use href="#glass"/></svg></button>
      <button class="btn tool" aria-label="Calculation parameters"><svg><use href="#treesw"/></svg></button>
      <button class="btn tool" aria-label="Calculate all"><svg><use href="#trees"/></svg></button>
    </div>
    <div class="tbar d-flex align-items-center" role="toolbar" aria-label="Workplane">
      <span class="grip"></span>
      <button class="btn tool" aria-label="Grid"><svg><use href="#hand"/></svg></button>
      <button class="btn tool" aria-label="Snap"><svg><use href="#snap"/></svg></button>
      <button class="btn tool active" aria-label="Plane XY"><svg><use href="#pxy"/></svg></button>
      <button class="btn tool" aria-label="Plane YZ"><svg><use href="#pyz"/></svg></button>
      <button class="btn tool" aria-label="Plane XZ"><svg><use href="#pxz"/></svg></button>
      <button class="btn tool" aria-label="Guidelines"><svg><use href="#mesh"/></svg></button>
      <button class="btn tool" aria-label="Workplane settings"><svg><use href="#gridw"/></svg></button>
      <span class="divide"></span>
      <button class="btn tool" aria-label="Move or copy"><svg><use href="#copy"/></svg></button>
      <button class="btn tool" aria-label="Rotate"><svg><use href="#rot"/></svg></button>
      <button class="btn tool" aria-label="Mirror"><svg><use href="#mirror"/></svg></button>
      <button class="btn tool" aria-label="Connect lines"><svg><use href="#inter"/></svg></button>
      <button class="btn tool" aria-label="Object info"><svg><use href="#info"/></svg></button>
      <button class="btn tool" aria-label="Plausibility check"><svg><use href="#clock"/></svg></button>
      <button class="btn tool" aria-label="Program options"><svg><use href="#gears"/></svg></button>
    </div>
    <div class="tbar d-flex align-items-center" role="toolbar" aria-label="Exchange">
      <span class="grip"></span>
      <button class="btn tool" aria-label="Import model"><svg><use href="#extd"/></svg></button>
      <button class="btn tool" aria-label="Export model"><svg><use href="#extu"/></svg></button>
      <button class="btn tool" aria-label="Import from CAD"><svg><use href="#pdfd"/></svg></button>
      <button class="btn tool" aria-label="Export to CAD"><svg><use href="#pdfu"/></svg></button>
    </div>
  </div>

  <div class="d-flex">
    <div class="tbar firstbar d-flex align-items-center" role="toolbar" aria-label="Insert objects">
      <span class="grip"></span>
      <button class="btn tool drop" aria-label="New node"><svg><use href="#node"/></svg></button>
      <button class="btn tool" aria-label="New line"><svg><use href="#line"/></svg></button>
      <button class="btn tool drop" aria-label="New member"><svg><use href="#member"/></svg></button>
      <button class="btn tool drop" aria-label="New polyline"><svg><use href="#poly"/></svg></button>
      <span class="divide"></span>
      <button class="btn tool" aria-label="Nodal support"><svg><use href="#nsup"/></svg></button>
      <button class="btn tool" aria-label="Line support"><svg><use href="#lsup"/></svg></button>
      <button class="btn tool" aria-label="Surface support"><svg><use href="#ssup"/></svg></button>
      <span class="divide"></span>
      <button class="btn tool drop" aria-label="Dimension"><svg><use href="#dim"/></svg></button>
      <button class="btn tool" aria-label="Comment"><svg><use href="#comm"/><text x="7" y="6" font-size="7" fill="#222">XX</text></svg></button>
      <button class="btn tool" aria-label="Line grid"><svg><use href="#raster"/></svg></button>
      <span class="divide"></span>
      <button class="btn tool drop" aria-label="New surface"><svg><use href="#surf"/></svg></button>
      <button class="btn tool drop" aria-label="New opening"><svg><use href="#opening"/></svg></button>
      <button class="btn tool drop" aria-label="Intersection"><svg><use href="#inters"/></svg></button>
      <button class="btn tool" aria-label="New solid"><svg><use href="#solidw"/></svg></button>
      <button class="btn tool drop" aria-label="New contact solid"><svg><use href="#solidn"/></svg></button>
      <span class="divide"></span>
      <button class="btn tool drop" aria-label="Combine loads"><svg><use href="#flow"/></svg></button>
      <button class="btn tool" aria-label="Nodal load"><svg><use href="#nload"/></svg></button>
      <button class="btn tool" aria-label="Member load"><svg><use href="#lloadg"/></svg></button>
      <button class="btn tool" aria-label="Line load"><svg><use href="#lload"/></svg></button>
      <button class="btn tool" aria-label="Surface load"><svg><use href="#sload"/></svg></button>
      <button class="btn tool drop" aria-label="Solid load"><svg><use href="#vload"/></svg></button>
    </div>
    <div class="tbar d-flex align-items-center" role="toolbar" aria-label="View">
      <span class="grip"></span>
      <button class="btn tool" aria-label="Pan"><svg><use href="#pan"/></svg></button>
      <button class="btn tool" aria-label="Zoom window"><svg><use href="#zoomw"/></svg></button>
      <button class="btn tool" aria-label="Show all"><svg><use href="#zoomx"/></svg></button>
      <button class="btn tool" aria-label="Isometric view"><svg><use href="#wire"/></svg></button>
      <button class="btn tool" aria-label="Perspective"><svg><use href="#blocks"/></svg></button>
      <span class="divide"></span>
      <button class="btn tool" aria-label="View in X"><svg><use href="#vx"/><text x="6" y="15" font-size="10" fill="#222">X</text></svg></button>
      <button class="btn tool" aria-label="View in Y"><svg><use href="#vy"/><text x="2" y="15" font-size="10" fill="#222">Y</text></svg></button>
      <button class="btn tool" aria-label="View in Z"><svg><use href="#vz"/><text x="7" y="15" font-size="10" fill="#222">Z</text></svg></button>
      <button class="btn tool drop" aria-label="View against X"><svg><use href="#vmx"/><text x="0" y="15" font-size="10" fill="#222">-X</text></svg></button>
      <button class="btn tool drop" aria-label="Details"><svg><use href="#micro"/></svg></button>
      <span class="divide"></span>
      <button class="btn tool drop" aria-label="Display model"><svg><use href="#lshape"/></svg></button>
    </div>
    <div class="tbar d-flex align-items-center" role="toolbar" aria-label="Results">
      <span class="grip"></span>
      <button class="btn tool" aria-label="Deformation"><svg><use href="#nframe"/></svg></button>
      <button class="btn tool" aria-label="Solid sections"><svg><use href="#solidr"/></svg></button>
      <span class="divide"></span>
      <button class="btn tool" aria-label="Member results"><svg><use href="#mres"/></svg></button>
      <button class="btn tool" aria-label="Surface results"><svg><use href="#fan"/></svg></button>
      <button class="btn tool" aria-label="Solid results"><svg><use href="#cubec"/></svg></button>
      <button class="btn tool" aria-label="Support reactions"><svg><use href="#react"/></svg></button>
      <button class="btn tool" aria-label="Sections"><svg><use href="#sect"/></svg></button>
      <button class="btn tool drop" aria-label="Result values"><svg><use href="#tiles"/></svg></button>
      <button class="btn tool" aria-label="Result diagrams"><svg><use href="#sectw"/></svg></button>
      <button class="btn tool" aria-label="Result beams"><svg><use href="#bars"/></svg></button>
      <span class="divide"></span>
      <button class="btn tool active" aria-label="Control panel"><svg><use href="#panel"/></svg></button>
      <button class="btn tool drop" aria-label="Visibilities"><svg><use href="#wand"/></svg></button>
      <button class="btn tool drop" aria-label="Colours"><svg><use href="#brush"/></svg></button>
    </div>
  </div>
</header>

<div class="workspace d-flex flex-grow-1">
  <aside class="navigator d-flex flex-column">
    <div class="panel-head d-flex align-items-center">
      <h2 class="me-auto">Project Navigator - Results</h2>
      <button class="btn" aria-label="Pin panel"><svg><use href="#pin"/></svg></button>
      <button class="btn" aria-label="Close panel"><svg><use href="#cross"/></svg></button>
    </div>
    <ul class="tree list-unstyled mb-0 flex-grow-1">
      <li class="top"><span class="fold"><button aria-label="Collapse"></button></span><label><input type="checkbox"><svg><use href="#frame"/></svg>Global Deformations</label></li>
      <li><span class="guide"></span><span class="twig"></span><label><input type="radio" name="deform" checked><svg><use href="#frame"/></svg>u</label></li>
      <li><span class="guide"></span><span class="twig"></span><label><input type="radio" name="deform"><svg><use href="#frame"/></svg>u<span class="axis">X</span></label></li>
      <li><span class="guide"></span><span class="twig"></span><label><input type="radio" name="deform"><svg><use href="#frame"/></svg>u<span class="axis">Y</span></label></li>
      <li><span class="guide"></span><span class="twig"></span><label><input type="radio" name="deform"><svg><use href="#frame"/></svg>u<span class="axis">Z</span></label></li>
      <li><span class="guide"></span><span class="twig"></span><label><input type="radio" name="deform"><svg><use href="#frame"/></svg>φ<span class="axis">X</span></label></li>
      <li><span class="guide"></span><span class="twig"></span><label><input type="radio" name="deform"><svg><use href="#frame"/></svg>φ<span class="axis">Y</span></label></li>
      <li class="end"><span class="guide"></span><span class="twig"></span><label><input type="radio" name="deform"><svg><use href="#frame"/></svg>φ<span class="axis">Z</span></label></li>
      <li><span class="fold"><button aria-label="Collapse"></button></span><label><input type="checkbox"><svg><use href="#fan"/></svg>Surfaces</label></li>
      <li><span class="guide"></span><span class="fold"><button class="shut" aria-label="Expand"></button></span><label><input type="checkbox" class="part"><svg><use href="#fan"/></svg>Local Deformations</label></li>
      <li><span class="guide"></span><span class="fold"><button aria-label="Collapse"></button></span><label><input type="checkbox" class="part"><svg><use href="#fan"/></svg>Basic Internal Forces</label></li>
      <li><span class="guide"></span><span class="guide"></span><span class="twig"></span><label><input type="radio" name="force" checked><svg><use href="#fan"/></svg>m<span class="axis">x</span></label></li>
      <li><span class="guide"></span><span class="guide"></span><span class="twig"></span><label><input type="radio" name="force"><svg><use href="#fan"/></svg>m<span class="axis">y</span></label></li>
      <li><span class="guide"></span><span class="guide"></span><span class="twig"></span><label><input type="radio" name="force"><svg><use href="#fan"/></svg>m<span class="axis">xy</span></label></li>
      <li><span class="guide"></span><span class="guide"></span><span class="twig"></span><label><input type="radio" name="force"><svg><use href="#fan"/></svg>v<span class="axis">x</span></label></li>
      <li><span class="guide"></span><span class="guide"></span><span class="twig"></span><label><input type="radio" name="force"><svg><use href="#fan"/></svg>v<span class="axis">y</span></label></li>
      <li><span class="guide"></span><span class="guide"></span><span class="twig"></span><label><input type="radio" name="force"><svg><use href="#fan"/></svg>n<span class="axis">x</span></label></li>
      <li><span class="guide"></span><span class="guide"></span><span class="twig"></span><label><input type="radio" name="force"><svg><use href="#fan"/></svg>n<span class="axis">y</span></label></li>
      <li class="end"><span class="guide"></span><span class="guide"></span><span class="twig"></span><label><input type="radio" name="force"><svg><use href="#fan"/></svg>n<span class="axis">xy</span></label></li>
      <li><span class="guide"></span><span class="fold"><button class="shut" aria-label="Expand"></button></span><label><input type="checkbox" class="part"><svg><use href="#fan"/></svg>Principal Internal Forces</label></li>
      <li><span class="guide"></span><span class="fold"><button class="shut" aria-label="Expand"></button></span><label><input type="checkbox" class="part"><svg><use href="#fan"/></svg>Design Internal Forces</label></li>
      <li><span class="guide"></span><span class="fold"><button class="shut" aria-label="Expand"></button></span><label><input type="checkbox" class="part"><svg><use href="#fan"/></svg>Stresses</label></li>
      <li><span class="guide"></span><span class="fold"><button class="shut" aria-label="Expand"></button></span><label><input type="checkbox" class="part"><svg><use href="#fan"/></svg>Strains</label></li>
      <li><span class="guide"></span><span class="fold"><button class="shut" aria-label="Expand"></button></span><label><input type="checkbox" class="part"><svg><use href="#fan"/></svg>Plastic Strains</label></li>
      <li><span class="guide"></span><span class="fold"><button class="shut" aria-label="Expand"></button></span><label><input type="checkbox" class="part"><svg><use href="#fan"/></svg>Isotropic surface characteristics</label></li>
      <li class="end"><span class="guide"></span><span class="fold"><button class="shut" aria-label="Expand"></button></span><label><input type="checkbox" class="part"><svg><use href="#fan"/></svg>Shape</label></li>
      <li><span class="fold"><button class="shut" aria-label="Expand"></button></span><label><input type="checkbox"><svg><use href="#frame"/></svg>Criteria</label></li>
      <li><span class="fold"><button class="shut" aria-label="Expand"></button></span><label><input type="checkbox"><svg><use href="#react"/></svg>Support Reactions</label></li>
      <li><span class="fold"><button class="shut" aria-label="Expand"></button></span><label><input type="checkbox"><svg><use href="#frame"/></svg>Distribution of load</label></li>
      <li class="end"><span class="fold"><button class="shut" aria-label="Expand"></button></span><label><input type="checkbox"><svg><use href="#xx"/><text x="3" y="10" font-size="8" fill="#4a4310">xx</text></svg>Values on Surfaces</label></li>
    </ul>
  </aside>

  <main class="docs d-flex flex-column flex-grow-1">
    <div class="viewport flex-grow-1">
      <!-- The model keeps its own coordinates; the group shifts them to the viewport's corner. -->
      <svg class="drawing" role="img" aria-label="Plate model with supports and dimensions">
        <symbol id="sup" viewBox="0 0 61 61" preserveAspectRatio="none"><path d="M0 0h61v61H0z" fill="#40e040"/><circle cx="30.500" cy="30.500" r="15" fill="url(#ring)"/><circle cx="30.500" cy="30.500" r="11" fill="#11e811"/><circle cx="30.500" cy="30.500" r="10.500" fill="none" stroke="#2cf62c" stroke-dasharray="7 3"/></symbol>
        <symbol id="supb" viewBox="0 0 61 61" preserveAspectRatio="none"><path d="M0 0h61v61H0z" fill="#40e040"/><circle cx="30.500" cy="30.500" r="15" fill="url(#ringb)"/><circle cx="30.500" cy="30.500" r="11" fill="#11e811"/><circle cx="30.500" cy="30.500" r="10.500" fill="none" stroke="#2cf62c" stroke-dasharray="7 3"/></symbol>
        <g transform="translate(-291 -101)">
          <text x="295" y="117" font-size="11">LC1</text>
          <text x="295" y="131" font-size="11">Loads [ksf]</text>
          <g>
            <use href="#sup" x="687" y="189" width="61" height="60"/><use href="#sup" x="808" y="189" width="61" height="60"/><use href="#sup" x="930" y="189" width="61" height="60"/><use href="#sup" x="1052" y="189" width="60" height="60"/>
            <use href="#sup" x="626" y="249" width="61" height="61"/><use href="#sup" x="626" y="371" width="61" height="61"/><use href="#sup" x="626" y="492" width="61" height="61"/><use href="#sup" x="626" y="614" width="61" height="61"/>
            <use href="#supb" x="1112" y="249" width="61" height="61"/><use href="#supb" x="1112" y="371" width="61" height="61"/><use href="#supb" x="1112" y="492" width="61" height="61"/><use href="#supb" x="1112" y="614" width="61" height="61"/>
            <use href="#supb" x="687" y="675" width="61" height="60"/><use href="#supb" x="808" y="675" width="61" height="60"/><use href="#supb" x="930" y="675" width="61" height="60"/><use href="#supb" x="1052" y="675" width="60" height="60"/>
          </g>
          <path d="M656.500 218.500h486v486h-486zM778.500 340.500v243h243v-243z" fill="#d4d4d4" fill-opacity=".75"/>
          <path d="M656.500 218.500h486v486h-486z" fill="none" stroke="#0f0"/>
          <g fill="none" stroke="#000080">
            <path d="M680.500 243.500h438v437h-438zM778.500 340.500h243v243h-243z"/>
            <path d="M766.500 327.500h266v268M766.500 328v268.500h267" stroke="#008080"/>
            <path d="M765.500 328.500h268v267h-268z"/>
            <path d="M779 458.500h108M913 458.500h108M849.500 341v107M849.500 474v109"/>
            <path d="M1148 218.500h277M1148 704.500h277M1419.500 219v226M1419.500 477v227"/>
            <path d="M656.500 710v140M1142.500 710v140M657 845.500h227M916 845.500h226"/>
          </g>
          <g fill="#000080">
            <path d="M780 458.500l8-2.500v5zM1020 458.500l-8-2.500v5zM849.500 342l-2.500 8h5zM849.500 582l-2.500-8h5z"/>
            <path d="M1419.500 220l-2.500 8h5zM1419.500 703l-2.500-8h5zM659 845.500l8-2.500v5zM1140 845.500l-8-2.500v5z"/>
            <circle cx="680.500" cy="243.500" r="2.500"/><circle cx="765.500" cy="328.500" r="2.500"/>
            <text x="671" y="236" font-size="9">0.209</text><text x="756" y="321" font-size="9">0.209</text>
            <g font-size="11" font-weight="700" text-anchor="middle">
              <text x="900" y="463">6.56</text><text x="900" y="850">13.12</text>
              <text transform="translate(854 461) rotate(-90)">6.56</text><text transform="translate(1424 461) rotate(-90)">13.12</text>
            </g>
          </g>
          <g fill="#800000"><circle cx="1142.500" cy="218.500" r="2.500"/><circle cx="656.500" cy="704.500" r="2.500"/><circle cx="1142.500" cy="704.500" r="2.500"/><circle cx="778.500" cy="340.500" r="2.500"/><circle cx="1021.500" cy="340.500" r="2.500"/><circle cx="778.500" cy="583.500" r="2.500"/><circle cx="1021.500" cy="583.500" r="2.500"/></g>
          <g>
            <path d="M657 218v34" stroke="#0f0" stroke-width="2"/><path d="M653.500 250h6l-3 10z" fill="#00a000"/><path d="M656 265l2 3 2-3" fill="none" stroke="#0f0"/>
            <path d="M658 219h34" stroke="#f00" stroke-width="2"/><path d="M688 216v6l9-3z" fill="#b00000"/><path d="M705 216l5 6M710 216l-5 6" stroke="#f00"/><path d="M654 216h6v6h-6z" fill="#00f"/><path d="M656 219h3v2h-3z" fill="#4cc"/>
            <path d="M346 765v34" stroke="#0f0" stroke-width="2"/><path d="M343 796h6l-3 9z" fill="#00a000"/>
            <path d="M346 765h34" stroke="#f00" stroke-width="2"/><path d="M377 762v6l9-3z" fill="#b00000"/><path d="M343 762h6v6h-6z" fill="#00f"/><path d="M345 765h3v2h-3z" fill="#4cc"/>
            <text x="393" y="769" font-size="9" fill="#f00">X</text><text x="343" y="819" font-size="9" fill="#0f0">Y</text>
          </g>
        </g>
      </svg>
    </div>

    <section class="results">
      <h2>4.0 Results - Summary</h2>
      <div class="tablebar d-flex align-items-center" role="toolbar" aria-label="Table">
        <button class="btn tool" aria-label="Edit table"><svg><use href="#t1"/></svg></button>
        <button class="btn tool" aria-label="Insert rows"><svg><use href="#t2"/></svg></button>
        <button class="btn tool" aria-label="Load tables"><svg><use href="#t3"/></svg></button>
        <button class="btn tool active" aria-label="Result tables"><svg><use href="#t4"/></svg></button>
        <button class="btn tool" aria-label="Dynamic tables"><svg><use href="#t5"/></svg></button>
        <span class="divide"></span>
        <button class="btn tool" aria-label="Previous table"><svg><use href="#t6"/></svg></button>
        <button class="btn tool" aria-label="Next table"><svg><use href="#t7"/></svg></button>
        <span class="divide"></span>
        <button class="btn tool" aria-label="Selection from view"><svg><use href="#t8"/></svg></button>
        <button class="btn tool active" aria-label="Selection to view"><svg><use href="#t9"/></svg></button>
        <span class="divide"></span>
        <button class="btn tool" aria-label="Colour rows"><svg><use href="#t10"/></svg></button>
        <button class="btn tool" aria-label="Mark rows"><svg><use href="#t11"/></svg></button>
        <span class="divide"></span>
        <select class="combo combo-table" aria-label="Table load case"><option>LC1</option></select>
        <span class="divide"></span>
        <button class="btn tool" aria-label="Previous case"><svg><use href="#prevb"/></svg></button>
        <button class="btn tool" aria-label="Next case"><svg><use href="#next"/></svg></button>
        <span class="divide"></span>
        <button class="btn tool" aria-label="Filter"><svg><use href="#filt"/></svg></button>
        <span class="divide"></span>
        <button class="btn tool" aria-label="Cross-section info"><svg><use href="#infog"/></svg></button>
        <span class="divide"></span>
        <button class="btn tool pressed" aria-label="Result bars"><svg><use href="#prog"/></svg></button>
        <span class="divide"></span>
        <button class="btn tool" aria-label="Export to Excel"><svg><use href="#excel"/></svg></button>
        <span class="divide"></span>
        <button class="btn tool" aria-label="Calculator"><svg><use href="#calc"/></svg></button>
      </div>
      <div class="sheet">
        <table>
          <colgroup><col style="width:46px"><col style="width:288px"><col style="width:72px"><col style="width:48px"><col style="width:396px"><col></colgroup>
          <thead>
            <tr><th class="rowhead" rowspan="2"></th><th class="picked">A</th><th>B</th><th>C</th><th>D</th><th class="void"></th></tr>
            <tr><th>Description</th><th>Value</th><th>Unit</th><th>Comment</th><th class="void"></th></tr>
          </thead>
          <tbody>
            <tr><th class="rowhead picked"></th><td class="case" colspan="4"><button aria-label="Collapse LC1"></button>LC1</td><td class="void"></td></tr>
            <tr class="tint"><th class="rowhead"></th><td class="item">Sum of loads in X</td><td class="num">0.000</td><td>kip</td><td></td><td class="void"></td></tr>
            <tr class="tint"><th class="rowhead"></th><td class="item">Sum of support forces in X</td><td class="num">0.000</td><td>kip</td><td></td><td class="void"></td></tr>
            <tr class="band"><th class="rowhead"></th><td class="item">Sum of loads in Y</td><td class="num">0.000</td><td>kip</td><td></td><td class="void"></td></tr>
            <tr class="plain"><th class="rowhead"></th><td class="item">Sum of support forces in Y</td><td class="num">0.000</td><td>kip</td><td></td><td class="void"></td></tr>
            <tr class="tint"><th class="rowhead"></th><td class="item">Sum of loads in Z</td><td class="num">26.977</td><td>kip</td><td></td><td class="void"></td></tr>
            <tr class="tint"><th class="rowhead"></th><td class="item">Sum of support forces in Z</td><td class="num">26.977</td><td>kip</td><td class="note">Deviation:&nbsp; 0.00 %</td><td class="void"></td></tr>
            <tr class="plain"><th class="rowhead"></th><td class="item">Resultant of reactions about X</td><td class="num">0.000</td><td>kipft</td><td class="note">At center of gravity of model (X: 6.562, Y: 6.562, Z: 0.000 ft)</td><td class="void"></td></tr>
          </tbody>
        </table>
        <div class="callout"></div>
      </div>
    </section>
  </main>
</div>
</body>
</html>
